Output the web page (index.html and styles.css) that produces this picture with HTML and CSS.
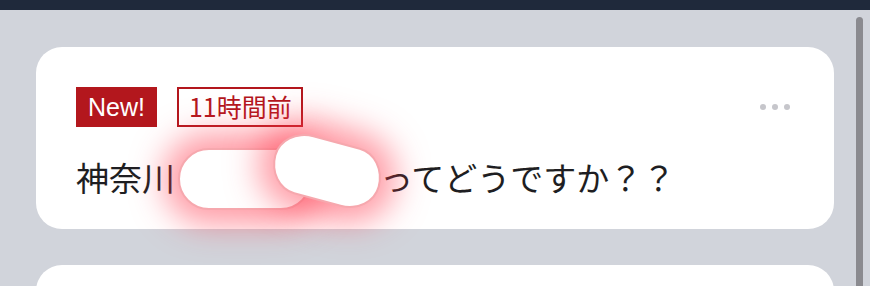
FILE: index.html
```html
<!DOCTYPE html>
<html lang="ja">
<head>
<meta charset="utf-8">
<link rel="stylesheet" href="styles.css">
</head>
<body>
<div class="topbar"></div>
<main class="list">
  <article class="card">
    <div class="meta">
      <span class="badge-new">New!</span>
      <span class="badge-time">11時間前</span>
      <span class="more"><i></i><i></i><i></i></span>
    </div>
    <p class="title">
      <span>神奈川</span>
      <span class="redact"><b class="blob b1"></b><b class="blob b2"></b></span>
      <span>ってどうですか？？</span>
    </p>
  </article>
  <article class="card"></article>
</main>
<div class="scrollbar"></div>
</body>
</html>
```
FILE: styles.css
```css
html, body {
  margin: 0;
  padding: 0;
  height: 286px;
  overflow: hidden;
}
body {
  background: #d1d4db;
  font-family: "Noto Sans CJK JP", "Noto Sans", sans-serif;
  position: relative;
}
.topbar {
  height: 10px;
  background: #1f293b;
}
.list {
  display: flex;
  flex-direction: column;
  gap: 36px;
  padding: 37px 36px 0 36px;
}
.card {
  background: #fff;
  border-radius: 26px;
  height: 182px;
  box-sizing: border-box;
  padding: 40px 44px 0 40px;
}
.meta {
  display: flex;
  align-items: center;
  gap: 20px;
  height: 40px;
}
.badge-new {
  background: #b3171d;
  color: #fff;
  font-family: "Liberation Sans", sans-serif;
  font-size: 25px;
  height: 40px;
  line-height: 40px;
  padding: 0 12px 0 12px;
  box-sizing: border-box;
}
.badge-time {
  border: 2px solid #b3171d;
  color: #b3171d;
  font-size: 25px;
  height: 40px;
  line-height: 34px;
  padding: 0 9px 0 10px;
  box-sizing: border-box;
}
.more {
  margin-left: auto;
  display: flex;
  gap: 6px;
}
.more i {
  width: 6px;
  height: 6px;
  border-radius: 50%;
  background: #c6c6cb;
}
.title {
  margin: 26px 0 0 0;
  display: flex;
  align-items: center;
  height: 48px;
  font-size: 33px;
  color: #1e1e22;
}
.redact {
  position: relative;
  width: 205px;
  height: 48px;
}
.blob {
  position: absolute;
  background: #fff;
  border: 2px solid #f6a8ae;
  box-sizing: border-box;
  border-radius: 40px;
  box-shadow: 0 0 32px 15px rgba(255, 60, 80, 0.5);
}
.b1 {
  left: 3px;
  top: -5px;
  width: 134px;
  height: 62px;
}
.b2 {
  left: 97px;
  top: -13px;
  width: 110px;
  height: 62px;
  transform: rotate(15deg);
  border-radius: 34px 30px 34px 30px / 30px 34px 30px 34px;
}
.scrollbar {
  position: absolute;
  left: 856px;
  top: 17px;
  width: 7px;
  height: 300px;
  border-radius: 4px;
  background: #8a8a8f;
}
```
